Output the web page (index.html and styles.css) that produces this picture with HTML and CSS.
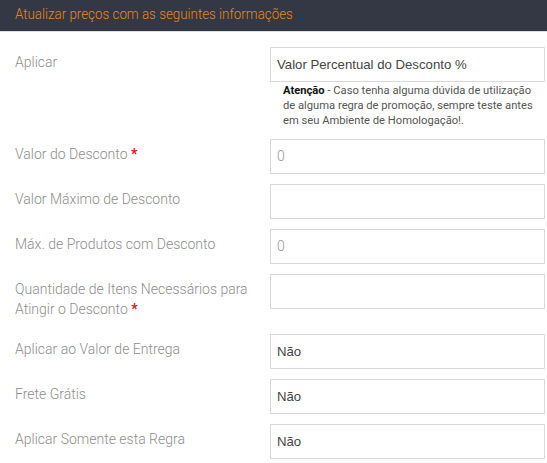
FILE: index.html
```html
<!DOCTYPE html>
<html lang="pt-BR">
<head>
<meta charset="utf-8">
<title>Atualizar preços</title>
<link rel="stylesheet" href="styles.css">
</head>
<body>
<div class="panel">
  <div class="panel-heading"><span class="title">Atualizar preços com as seguintes informações</span></div>
  <form class="panel-body">
    <div class="row">
      <label class="label">Aplicar</label>
      <div class="field">
        <div class="control select">Valor Percentual do Desconto %</div>
        <p class="help"><b>Atenção</b> - Caso tenha alguma dúvida de utilização de alguma regra de promoção, sempre teste antes em seu Ambiente de Homologação!.</p>
      </div>
    </div>
    <div class="row">
      <label class="label">Valor do Desconto <span class="req">*</span></label>
      <div class="field"><div class="control placeholder">0</div></div>
    </div>
    <div class="row">
      <label class="label">Valor Máximo de Desconto</label>
      <div class="field"><div class="control placeholder"></div></div>
    </div>
    <div class="row">
      <label class="label">Máx. de Produtos com Desconto</label>
      <div class="field"><div class="control placeholder">0</div></div>
    </div>
    <div class="row">
      <label class="label">Quantidade de Itens Necessários para Atingir o Desconto <span class="req">*</span></label>
      <div class="field"><div class="control placeholder"></div></div>
    </div>
    <div class="row">
      <label class="label">Aplicar ao Valor de Entrega</label>
      <div class="field"><div class="control select">Não</div></div>
    </div>
    <div class="row">
      <label class="label">Frete Grátis</label>
      <div class="field"><div class="control select">Não</div></div>
    </div>
    <div class="row">
      <label class="label">Aplicar Somente esta Regra</label>
      <div class="field"><div class="control select">Não</div></div>
    </div>
  </form>
</div>
</body>
</html>
```
FILE: styles.css
```css
html, body {
  margin: 0;
  padding: 0;
  background: #fff;
}
body {
  font-family: Roboto, "Liberation Sans", sans-serif;
}
.panel-heading {
  height: 31px;
  line-height: 29px;
  background: #333844;
  color: #e8861c;
  font-size: 15px;
  font-weight: 300;
  padding-left: 15px;
  border-bottom: 1px solid #dcdde0;
  box-sizing: content-box;
  white-space: nowrap;
}
.title {
  display: inline-block;
  transform: scaleX(0.89);
  transform-origin: left center;
}
.panel-body {
  padding-top: 15px;
  margin: 0;
}
.row {
  display: grid;
  grid-template-columns: 270px 275px;
  margin-bottom: 10px;
}
.label {
  padding: 5px 15px 5px 15px;
  font-size: 14px;
  line-height: 20px;
  font-weight: 300;
  color: #8e8e8e;
}
.req {
  color: #e0101a;
  font-weight: 700;
}
.control {
  height: 35px;
  box-sizing: border-box;
  border: 1px solid #d9d9dc;
  padding: 0 6px;
  line-height: 33px;
  font-size: 13px;
}
.select {
  font-family: "Liberation Sans", Arial, sans-serif;
  font-size: 13.2px;
  color: #444;
}
.placeholder {
  font-family: Roboto, sans-serif;
  font-weight: 300;
  color: #9a9a9a;
  font-size: 14px;
}
.help {
  margin: 1px 0 1px 0;
  padding: 0 10px 0 13px;
  font-size: 11.2px;
  line-height: 15px;
  color: #555;
}
.help b {
  color: #111;
  font-weight: 700;
}
```
